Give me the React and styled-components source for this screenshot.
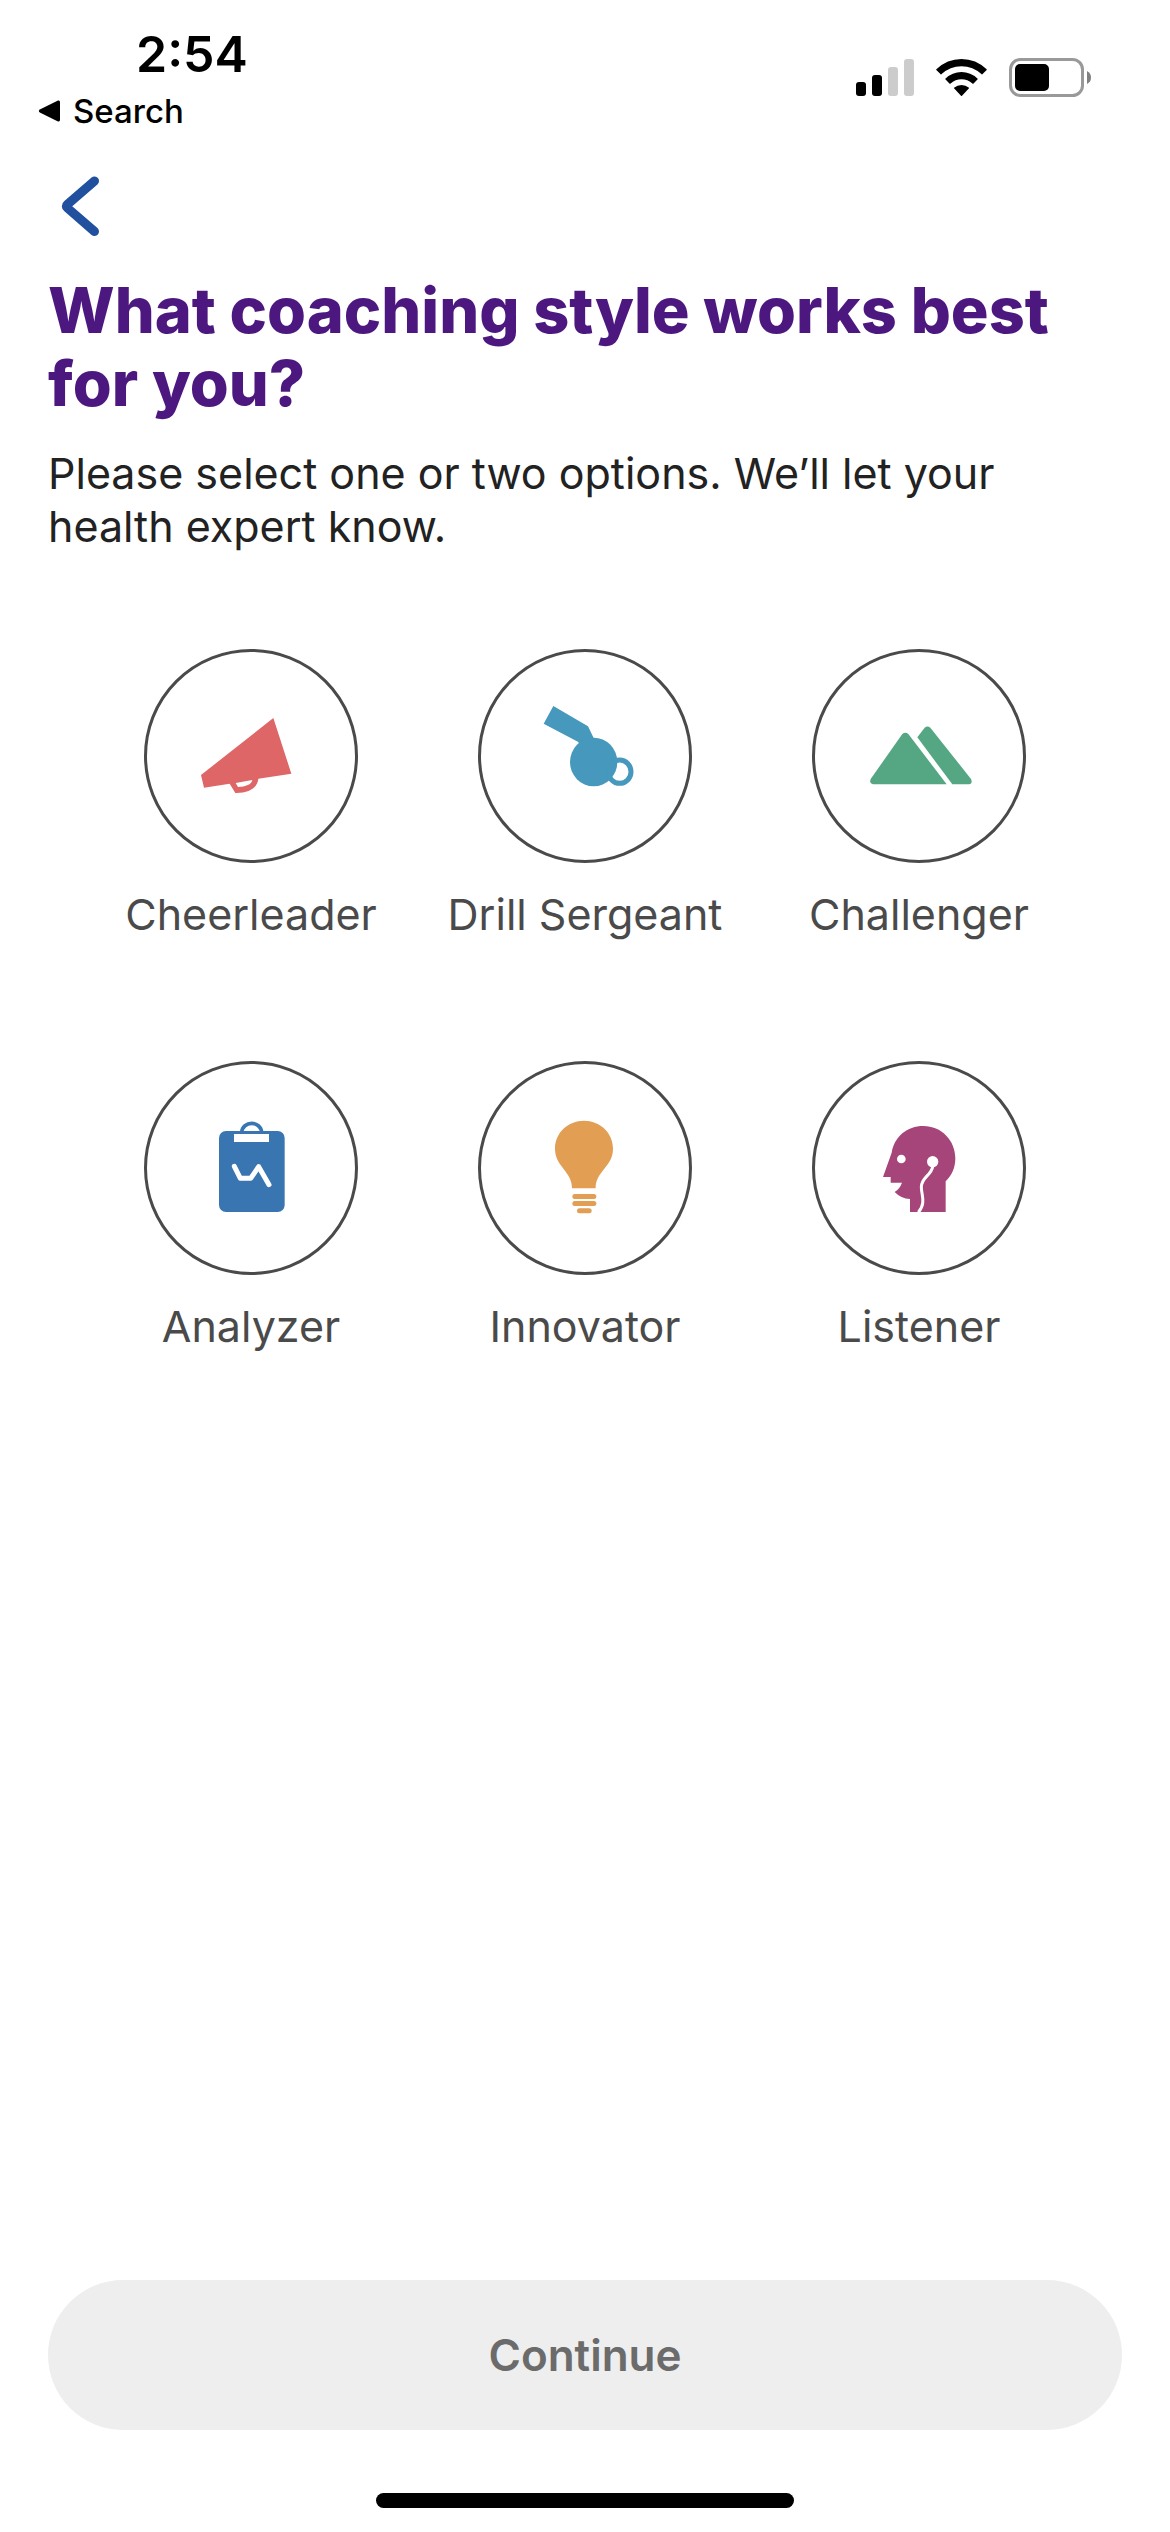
import React, { useState } from "react";
import styled, { createGlobalStyle } from "styled-components";

const GlobalStyle = createGlobalStyle`
      * {
            box-sizing: border-box;
      }

      body {
            margin: 0;
            background: #ffffff;
            font-family: Inter, "Liberation Sans", sans-serif;
      }

      button {
            font-family: inherit;
            cursor: pointer;
      }
`;

const Screen = styled.div`
      display: flex;
      flex-direction: column;
      min-height: 100vh;
      padding-bottom: 24px;
`;

const StatusBar = styled.header`
      display: flex;
      justify-content: space-between;
      align-items: flex-start;
      padding: 24px 78px 0 36px;
      color: #000000;
`;

const StatusLeft = styled.div`
      display: flex;
      flex-direction: column;
`;

const Time = styled.span`
      padding-left: 100px;
      font-size: 50px;
      font-weight: 600;
      line-height: 60px;
`;

const SearchLink = styled.a`
      display: flex;
      align-items: center;
      gap: 12px;
      padding-top: 6px;
      color: inherit;
      font-size: 33px;
      font-weight: 500;
      line-height: 42px;
      text-decoration: none;
`;

const StatusIcons = styled.div`
      display: flex;
      align-items: center;
      gap: 22px;
      padding-top: 34px;
`;

const BackButton = styled.button`
      align-self: flex-start;
      display: flex;
      margin: 36px 0 0 48px;
      padding: 8px 12px;
      border: none;
      background: none;
`;

const Content = styled.main`
      padding: 30px 48px 0;
`;

const Title = styled.h1`
      margin: 0;
      color: #4c187f;
      font-size: 63px;
      font-weight: 800;
      line-height: 73px;
`;

const Subtitle = styled.p`
      margin: 27px 0 0;
      color: #222222;
      font-size: 43px;
      font-weight: 400;
      line-height: 53px;
`;

const OptionGrid = styled.div`
      display: grid;
      grid-template-columns: repeat(3, 1fr);
      row-gap: 120px;
      padding: 96px 36px 0;
`;

const Option = styled.button`
      display: flex;
      flex-direction: column;
      align-items: center;
      gap: 24px;
      padding: 0;
      border: none;
      background: none;
      color: #4a4a4a;
      font-size: 43px;
      line-height: 54px;
      white-space: nowrap;
`;

const Circle = styled.span`
      display: flex;
      align-items: center;
      justify-content: center;
      width: 214px;
      height: 214px;
      border: 3px solid #4a4a4a;
      border-radius: 50%;
      background: ${(props) => (props.$selected ? "#eeeeee" : "#ffffff")};
`;

const Footer = styled.footer`
      display: flex;
      flex-direction: column;
      align-items: center;
      gap: 63px;
      margin-top: auto;
      padding: 0 48px;
`;

const ContinueButton = styled.button`
      width: 100%;
      height: 150px;
      border: none;
      border-radius: 75px;
      background: #eeeeee;
      color: #6b6b6b;
      font-size: 44px;
      font-weight: 600;
`;

const HomeIndicator = styled.div`
      width: 418px;
      height: 15px;
      border-radius: 8px;
      background: #000000;
`;

function BackTriangle() {
      return (
            <svg width="25" height="24" viewBox="0 0 25 24" aria-hidden="true">
                  <path d="M22 1.6 4.3 10.2q-3 1.8 0 3.6L22 22.4q2 .6 2-1.6V3.2q0-2.2-2-1.6Z" />
            </svg>
      );
}

function SignalIcon() {
      return (
            <svg width="58" height="38" viewBox="0 0 58 38" aria-hidden="true">
                  <rect x="0" y="23" width="10" height="14" rx="3" />
                  <rect x="16" y="16" width="10" height="21" rx="3" />
                  <rect x="32" y="8" width="10" height="29" rx="3" fill="#cccccc" />
                  <rect x="48" y="0" width="10" height="37" rx="3" fill="#cccccc" />
            </svg>
      );
}

function WifiIcon() {
      return (
            <svg width="51" height="38" viewBox="0 0 153 114" aria-hidden="true">
                  <path d="M1 33Q0 32 1 31Q33 0 76.5 0Q120 0 152 31Q153 32 152 33L139 46Q138 47 137 46Q111 22 76.5 22Q42 22 16 46Q15 47 14 46Z" />
                  <path d="M28 61Q27 60 28 59Q49 39 76.5 39Q104 39 125 59Q126 60 125 61L112 74Q111 75 110 74Q95 61 76.5 61Q58 61 43 74Q42 75 41 74Z" />
                  <path d="M54 88Q53 87 54 86Q64 78 76.5 78Q89 78 99 86Q100 87 99 88L78 110Q76.5 112 75 110Z" />
            </svg>
      );
}

function BatteryIcon() {
      return (
            <svg width="83" height="40" viewBox="0 0 83 40" aria-hidden="true">
                  <rect x="1.5" y="1.5" width="72" height="36" rx="10" fill="none" stroke="#999999" strokeWidth="3" />
                  <rect x="6" y="6" width="34" height="27" rx="5" />
                  <path d="M78 13q4 2 4 6.5t-4 6.5z" fill="#808080" />
            </svg>
      );
}

function ChevronIcon() {
      return (
            <svg width="40" height="60" viewBox="0 0 40 60" fill="none" aria-hidden="true">
                  <path d="M34.5 5 7.3 28.5q-2 1.7 0 3.4L34.5 55.5" stroke="#20509e" strokeWidth="9" strokeLinecap="round" strokeLinejoin="round" />
            </svg>
      );
}

function MegaphoneIcon() {
      return (
            <svg width="120" height="120" viewBox="183 168 360 360" fill="#de6666" aria-hidden="true">
                  <path fillRule="evenodd" d="M430 234 484 401 385 416C383 442 358 460 316 459L299 431 222 443 213 405ZM317 429 324 441C348 440 364 434 367 420Z" />
            </svg>
      );
}

function WhistleIcon() {
      return (
            <svg width="120" height="120" viewBox="165 168 360 360" fill="#4698bd" aria-hidden="true">
                  <path d="M250 198 354 259 371 294 328 314 325 306 221 251Z" />
                  <ellipse cx="371" cy="366" rx="71" ry="73" />
                  <ellipse cx="449" cy="395" rx="34" ry="35" fill="none" stroke="#4698bd" strokeWidth="15" />
            </svg>
      );
}

function MountainIcon() {
      return (
            <svg width="120" height="120" viewBox="177 168 360 360" fill="#55a682" aria-hidden="true">
                  <path d="M307 282Q316 275 325 282L440 433H219Q207 430 212 417Z" />
                  <path d="M374 263Q382 256 391 263L513 417Q519 430 508 433H457L352 292Z" />
            </svg>
      );
}

function ClipboardIcon() {
      return (
            <svg width="120" height="120" viewBox="183 174 360 360" aria-hidden="true">
                  <path d="M335 248C337 211 393 211 395 248" fill="none" stroke="#3875b1" strokeWidth="11" />
                  <rect x="267" y="243" width="197" height="243" rx="21" fill="#3875b1" />
                  <path d="M312 252H417V276H312Z" fill="#ffffff" />
                  <path d="M313 349 331 385H362L386 350 417 404" fill="none" stroke="#ffffff" strokeWidth="15" strokeLinecap="round" strokeLinejoin="round" />
            </svg>
      );
}

function BulbIcon() {
      return (
            <svg width="120" height="120" viewBox="165 174 360 360" fill="#e29e53" aria-hidden="true">
                  <path d="M342 212C390 212 429 248 429 296C429 350 376 364 377 415H306C307 364 255 350 255 296C255 248 294 212 342 212Z" />
                  <rect x="307" y="432" width="72" height="15" rx="7.5" />
                  <rect x="307" y="453" width="72" height="15" rx="7.5" />
                  <rect x="321" y="475" width="44" height="15" rx="7.5" />
            </svg>
      );
}

function ListenerIcon() {
      return (
            <svg width="120" height="120" viewBox="177 174 360 360" aria-hidden="true">
                  <path d="M370 228C424 228 466 271 466 325C466 354 455 376 437 394V486H330V447Q303 446 284 426Q299 417 306 398H272V381H249L275 308C283 260 321 228 370 228Z" fill="#a6457a" />
                  <circle cx="304" cy="327" r="13" fill="#ffffff" />
                  <circle cx="398" cy="335" r="17" fill="#ffffff" />
                  <path d="M398 350C394 376 364 382 364 411C364 435 379 459 355 487" fill="none" stroke="#ffffff" strokeWidth="9" />
            </svg>
      );
}

const options = [
      { name: "Cheerleader", Icon: MegaphoneIcon },
      { name: "Drill Sergeant", Icon: WhistleIcon },
      { name: "Challenger", Icon: MountainIcon },
      { name: "Analyzer", Icon: ClipboardIcon },
      { name: "Innovator", Icon: BulbIcon },
      { name: "Listener", Icon: ListenerIcon },
];

function App() {
      const [selected, setSelected] = useState([]);

      // at most two styles can be picked
      const toggle = (name) => {
            if (selected.includes(name)) {
                  setSelected(selected.filter((item) => item !== name));
            } else if (selected.length < 2) {
                  setSelected([...selected, name]);
            }
      };

      return (
            <Screen>
                  <GlobalStyle />
                  <StatusBar>
                        <StatusLeft>
                              <Time>2:54</Time>
                              <SearchLink href="#search">
                                    <BackTriangle />
                                    Search
                              </SearchLink>
                        </StatusLeft>
                        <StatusIcons>
                              <SignalIcon />
                              <WifiIcon />
                              <BatteryIcon />
                        </StatusIcons>
                  </StatusBar>
                  <BackButton type="button" aria-label="Back">
                        <ChevronIcon />
                  </BackButton>
                  <Content>
                        <Title>What coaching style works best for you?</Title>
                        <Subtitle>
                              Please select one or two options. We’ll let your health expert know.
                        </Subtitle>
                        <OptionGrid>
                              {options.map(({ name, Icon }) => (
                                    <Option
                                          key={name}
                                          type="button"
                                          aria-pressed={selected.includes(name)}
                                          onClick={() => toggle(name)}
                                    >
                                          <Circle $selected={selected.includes(name)}>
                                                <Icon />
                                          </Circle>
                                          {name}
                                    </Option>
                              ))}
                        </OptionGrid>
                  </Content>
                  <Footer>
                        <ContinueButton type="button">Continue</ContinueButton>
                        <HomeIndicator />
                  </Footer>
            </Screen>
      );
}

export default App;
